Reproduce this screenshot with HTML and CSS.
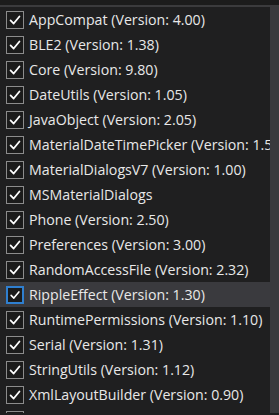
FILE: index.html
```html
<!DOCTYPE html>
<html>
<head>
<meta charset="utf-8">
<link rel="stylesheet" href="styles.css">
</head>
<body>
<div class="topbar"></div>
<div class="panel">
  <div class="list">
    <div class="row"><span class="cb"><svg viewBox="0 0 18 18"><path d="M4 9.5 L7.5 13 L14 5"/></svg></span><span class="label">AppCompat (Version: 4.00)</span></div>
    <div class="row"><span class="cb"><svg viewBox="0 0 18 18"><path d="M4 9.5 L7.5 13 L14 5"/></svg></span><span class="label">BLE2 (Version: 1.38)</span></div>
    <div class="row"><span class="cb"><svg viewBox="0 0 18 18"><path d="M4 9.5 L7.5 13 L14 5"/></svg></span><span class="label">Core (Version: 9.80)</span></div>
    <div class="row"><span class="cb"><svg viewBox="0 0 18 18"><path d="M4 9.5 L7.5 13 L14 5"/></svg></span><span class="label">DateUtils (Version: 1.05)</span></div>
    <div class="row"><span class="cb"><svg viewBox="0 0 18 18"><path d="M4 9.5 L7.5 13 L14 5"/></svg></span><span class="label">JavaObject (Version: 2.05)</span></div>
    <div class="row"><span class="cb"><svg viewBox="0 0 18 18"><path d="M4 9.5 L7.5 13 L14 5"/></svg></span><span class="label">MaterialDateTimePicker (Version: 1.5</span></div>
    <div class="row"><span class="cb"><svg viewBox="0 0 18 18"><path d="M4 9.5 L7.5 13 L14 5"/></svg></span><span class="label">MaterialDialogsV7 (Version: 1.00)</span></div>
    <div class="row"><span class="cb"><svg viewBox="0 0 18 18"><path d="M4 9.5 L7.5 13 L14 5"/></svg></span><span class="label">MSMaterialDialogs</span></div>
    <div class="row"><span class="cb"><svg viewBox="0 0 18 18"><path d="M4 9.5 L7.5 13 L14 5"/></svg></span><span class="label">Phone (Version: 2.50)</span></div>
    <div class="row"><span class="cb"><svg viewBox="0 0 18 18"><path d="M4 9.5 L7.5 13 L14 5"/></svg></span><span class="label">Preferences (Version: 3.00)</span></div>
    <div class="row"><span class="cb"><svg viewBox="0 0 18 18"><path d="M4 9.5 L7.5 13 L14 5"/></svg></span><span class="label">RandomAccessFile (Version: 2.32)</span></div>
    <div class="row selected"><span class="cb focus"><svg viewBox="0 0 18 18"><path d="M4 9.5 L7.5 13 L14 5"/></svg></span><span class="label">RippleEffect (Version: 1.30)</span></div>
    <div class="row"><span class="cb"><svg viewBox="0 0 18 18"><path d="M4 9.5 L7.5 13 L14 5"/></svg></span><span class="label">RuntimePermissions (Version: 1.10)</span></div>
    <div class="row"><span class="cb"><svg viewBox="0 0 18 18"><path d="M4 9.5 L7.5 13 L14 5"/></svg></span><span class="label">Serial (Version: 1.31)</span></div>
    <div class="row"><span class="cb"><svg viewBox="0 0 18 18"><path d="M4 9.5 L7.5 13 L14 5"/></svg></span><span class="label">StringUtils (Version: 1.12)</span></div>
    <div class="row"><span class="cb"><svg viewBox="0 0 18 18"><path d="M4 9.5 L7.5 13 L14 5"/></svg></span><span class="label">XmlLayoutBuilder (Version: 0.90)</span></div>
    <div class="row"><span class="cb"></span><span class="label"></span></div>
  </div>
  <div class="scrollbar"></div>
</div>
</body>
</html>
```
FILE: styles.css
```css
* { box-sizing: border-box; }
html, body {
  margin: 0;
  padding: 0;
  width: 279px;
  height: 415px;
  overflow: hidden;
  background: #1f1f20;
}
body {
  font-family: "Open Sans", "Noto Sans", sans-serif;
  color: #e8e8e8;
}
.topbar {
  height: 7px;
  background: #1c1c1c;
  border-bottom: 2px solid #3b3b3d;
}
.panel {
  display: flex;
  height: 406px;
}
.list {
  flex: 1;
  display: flex;
  flex-direction: column;
  overflow: hidden;
  background: #1f1f20;
}
.row {
  flex: 0 0 25px;
  height: 25px;
  display: flex;
  align-items: center;
  gap: 5px;
  padding-left: 6px;
  white-space: nowrap;
}
.row.selected {
  background: #3a3a3e;
}
.cb {
  flex: 0 0 18px;
  width: 18px;
  height: 18px;
  border: 1px solid #8c8c8c;
  background: #1b1b1b;
  display: flex;
  align-items: center;
  justify-content: center;
}
.cb.focus {
  border: 2px solid #2f7fd0;
}
.cb svg {
  width: 16px;
  height: 16px;
  fill: none;
  stroke: #ffffff;
  stroke-width: 2;
  stroke-linecap: round;
  stroke-linejoin: round;
}
.label {
  font-size: 14.2px;
}
.scrollbar {
  flex: 0 0 9px;
  background: #3a3a3d;
}
```
